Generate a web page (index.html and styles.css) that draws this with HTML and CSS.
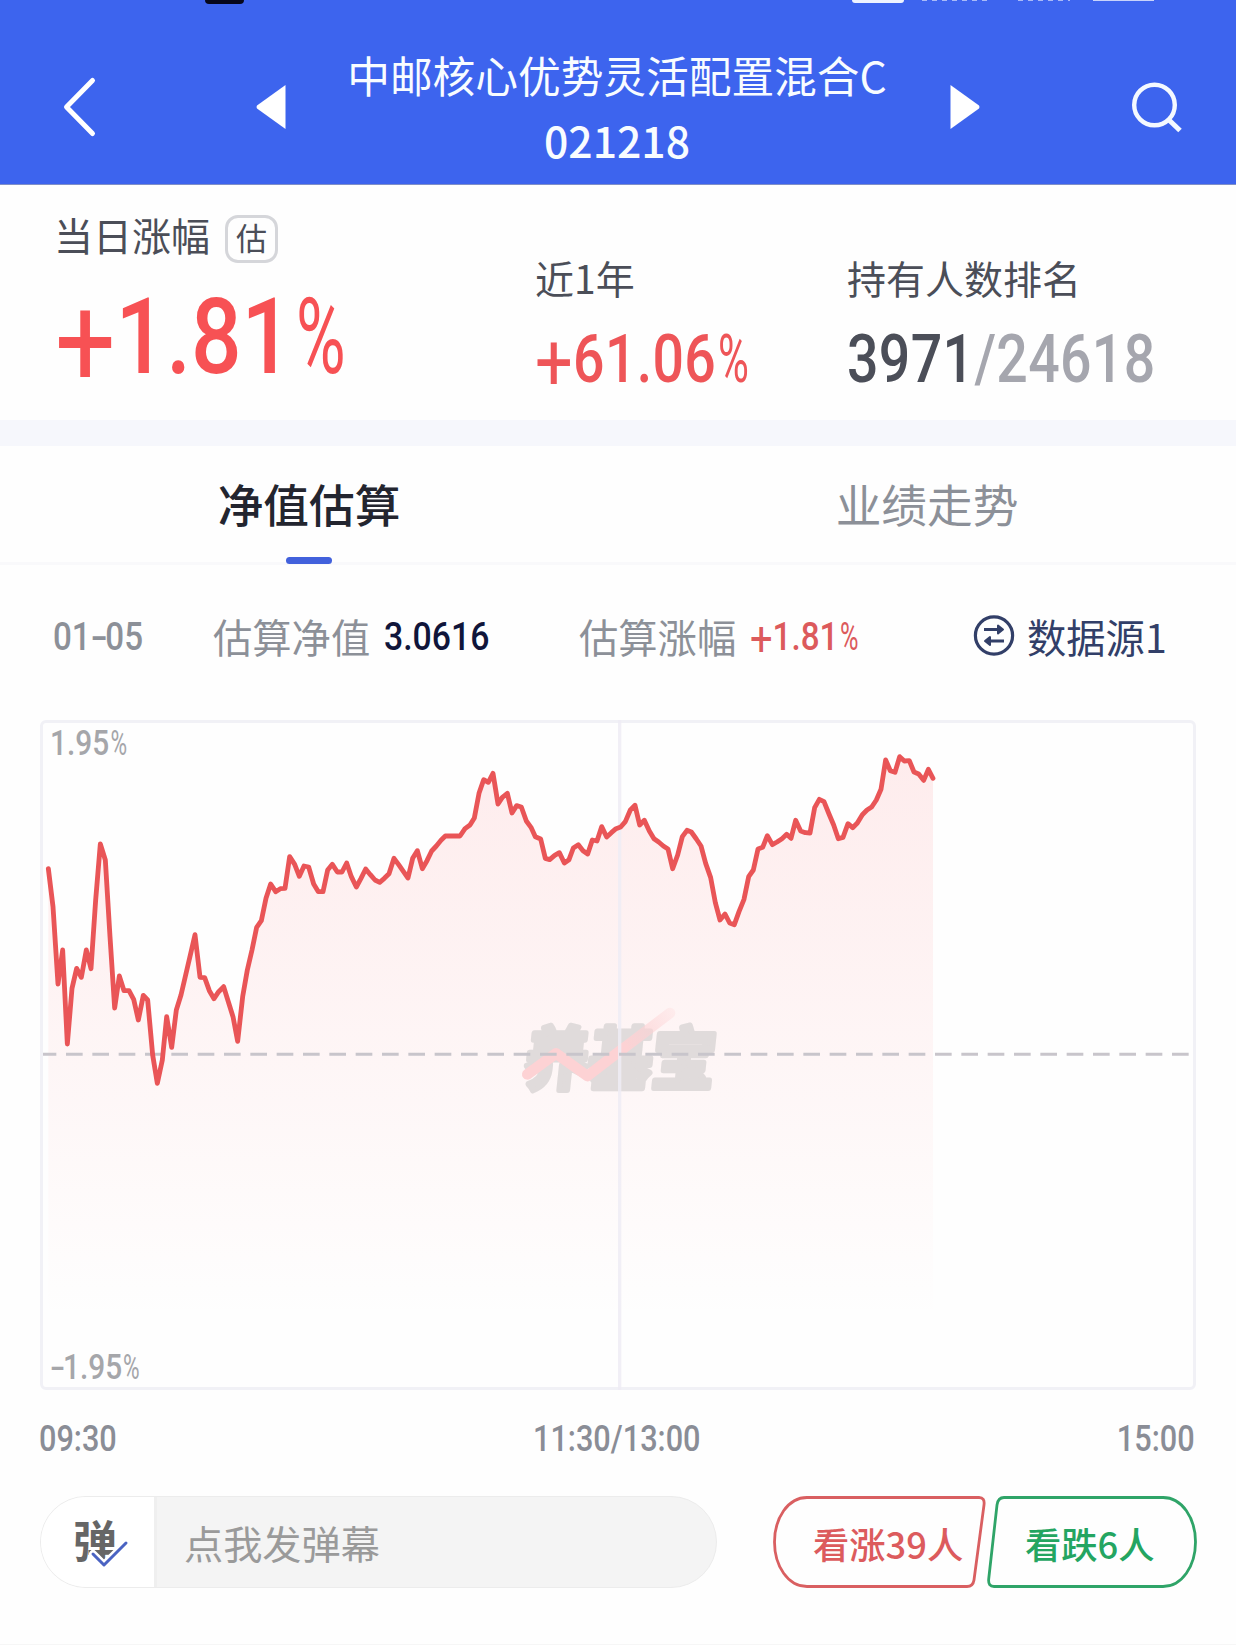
FILE: index.html
```html
<!DOCTYPE html>
<html lang="zh-CN">
<head>
<meta charset="utf-8">
<title>中邮核心优势灵活配置混合C</title>
<link rel="stylesheet" href="styles.css">
</head>
<body>
<header class="topbar">
  <div class="status"><i class="s-black"></i><i class="s-white"></i><i class="s-dots"></i><i class="s-dots s-dots2"></i><i class="s-batt"></i></div>
  <svg class="ic-back" width="40" height="70" viewBox="0 0 40 70"><path d="M32.500 8.500 6.500 35 32.500 61.500" fill="none" stroke="#fff" stroke-width="5" stroke-linecap="round" stroke-linejoin="round"/></svg>
  <svg class="ic-prev" width="30" height="46" viewBox="0 0 30 46"><path d="M29.500 1V45L1 24.500Q0 23 1 21.500Z" fill="#fff"/></svg>
  <h1 class="title"><span>中邮核心优势灵活配置混合C</span><span class="code">021218</span></h1>
  <svg class="ic-next" width="30" height="46" viewBox="0 0 30 46"><path d="M.5 1V45L29 24.500Q30 23 29 21.500Z" fill="#fff"/></svg>
  <svg class="ic-search" width="56" height="56" viewBox="0 0 56 56"><circle cx="26.500" cy="26" r="20.300" fill="none" stroke="#f4f9ff" stroke-width="4.400"/><path d="M41 41 52 51.500" stroke="#f4f9ff" stroke-width="5"/></svg>
</header>

<section class="stats">
  <div class="stat stat-day">
    <div class="label">当日涨幅<span class="badge">估</span></div>
    <div class="num big up"><span class="plus">+</span>1.81<span class="pct">%</span></div>
  </div>
  <div class="stat">
    <div class="label">近1年</div>
    <div class="num mid up"><span class="plus">+</span>61.06<span class="pct">%</span></div>
  </div>
  <div class="stat">
    <div class="label">持有人数排名</div>
    <div class="num mid rank">3971<span>/24618</span></div>
  </div>
</section>

<nav class="tabs">
  <div class="tab active">净值估算</div>
  <div class="tab">业绩走势</div>
</nav>

<section class="info">
  <div class="cell c-date"><span class="num sm">01<span class="dash">-</span>05</span></div>
  <div class="cell c-nav">估算净值<span class="num sm dark">3.0616</span></div>
  <div class="cell c-chg">估算涨幅<span class="num sm red"><span class="plus">+</span>1.81<span class="pct">%</span></span></div>
  <div class="cell c-src">
    <svg width="42" height="42" viewBox="0 0 42 42" fill="none" stroke="#323f68" stroke-width="3.200" stroke-linejoin="round"><circle cx="21" cy="20.500" r="18.600"/><path d="M11 14.500H27M31 26H15"/><path d="M25 10.500V18.500L30 14.500ZM17 22V30L12 26Z" fill="#323f68" stroke-width="2"/></svg>
    <span>数据源1</span>
  </div>
</section>

<section class="chart">
  <svg class="plot" viewBox="30 -60 3468 2010" preserveAspectRatio="none">
    <defs>
      <linearGradient id="fill" gradientUnits="userSpaceOnUse" x1="0" y1="50" x2="0" y2="1740"><stop offset="0" stop-color="#fc4a50" stop-opacity=".1"/><stop offset="1" stop-color="#fc4a50" stop-opacity="0"/></linearGradient>
      <linearGradient id="arrow" gradientUnits="userSpaceOnUse" x1="1780" y1="920" x2="1930" y2="810"><stop offset="0" stop-color="#fdd2d4"/><stop offset="1" stop-color="#fdd2d4" stop-opacity=".25"/></linearGradient>
    </defs>
    <path fill="url(#fill)" d="M55 386 69 500 84 732 98 630 112 912 126 745 140 685 154 712 169 630 183 686 197 480 211 312 226 360 240 590 254 804 268 708 282 752 297 752 311 778 325 840 340 766 353 780 368 945 382 1030 397 960 410 830 425 922 439 810 453 765 467 705 481 645 495 584 510 712 524 713 538 752 552 776 566 755 581 740 595 785 609 830 623 904 638 770 652 690 666 630 680 562 694 542 708 475 722 432 737 455 751 446 765 445 779 350 794 373 808 409 822 378 836 381 851 432 865 455 879 455 893 390 907 373 922 396 936 396 950 369 964 410 979 441 993 415 1007 387 1021 404 1035 420 1049 427 1063 415 1077 401 1092 355 1106 374 1120 394 1134 414 1148 355 1162 332 1177 386 1191 362 1205 333 1219 318 1233 301 1246 288 1290 288 1305 266 1320 255 1333 234 1347 160 1361 119 1375 127 1389 100 1404 192 1417 172 1432 160 1446 219 1460 197 1474 201 1489 243 1503 262 1516 290 1532 297 1546 355 1559 359 1574 346 1588 338 1603 369 1617 359 1630 324 1645 314 1659 332 1673 342 1687 300 1701 303 1715 260 1730 291 1744 278 1758 266 1772 261 1786 245 1801 210 1815 196 1829 255 1843 241 1858 273 1872 296 1886 306 1900 318 1914 327 1928 386 1943 345 1957 290 1971 271 1984 276 1999 297 2013 318 2027 370 2042 413 2056 488 2070 540 2085 522 2099 549 2113 554 2127 515 2142 478 2156 410 2170 390 2184 327 2198 322 2212 287 2227 314 2241 306 2256 296 2270 283 2283 295 2297 241 2312 273 2326 278 2340 279 2354 203 2368 178 2382 185 2397 222 2411 255 2425 296 2439 292 2454 251 2468 263 2482 249 2497 224 2511 210 2525 201 2539 180 2553 148 2567 60 2581 92 2595 97 2609 50 2623 63 2638 62 2652 96 2666 102 2681 121 2695 88 2709 115V1940H55Z"/>
    <g class="watermark">
      <text transform="translate(1478 1031) skewX(-6)" textLength="572" lengthAdjust="spacingAndGlyphs">养基宝</text>
      <path d="M1492 1003 1578 940 1672 1008 1780 925" stroke="#fdd2d4"/>
      <path d="M1775 929 1920 819" stroke="url(#arrow)"/>
    </g>
    <path d="M1769 -60V1950" stroke="#eeecf4" stroke-opacity=".85" stroke-width="10"/>
    <path d="M39 943H3480" stroke="#c8c5cb" stroke-width="9" stroke-dasharray="50 29" stroke-dashoffset="10"/>
    <path class="line" d="M55 386 69 500 84 732 98 630 112 912 126 745 140 685 154 712 169 630 183 686 197 480 211 312 226 360 240 590 254 804 268 708 282 752 297 752 311 778 325 840 340 766 353 780 368 945 382 1030 397 960 410 830 425 922 439 810 453 765 467 705 481 645 495 584 510 712 524 713 538 752 552 776 566 755 581 740 595 785 609 830 623 904 638 770 652 690 666 630 680 562 694 542 708 475 722 432 737 455 751 446 765 445 779 350 794 373 808 409 822 378 836 381 851 432 865 455 879 455 893 390 907 373 922 396 936 396 950 369 964 410 979 441 993 415 1007 387 1021 404 1035 420 1049 427 1063 415 1077 401 1092 355 1106 374 1120 394 1134 414 1148 355 1162 332 1177 386 1191 362 1205 333 1219 318 1233 301 1246 288 1290 288 1305 266 1320 255 1333 234 1347 160 1361 119 1375 127 1389 100 1404 192 1417 172 1432 160 1446 219 1460 197 1474 201 1489 243 1503 262 1516 290 1532 297 1546 355 1559 359 1574 346 1588 338 1603 369 1617 359 1630 324 1645 314 1659 332 1673 342 1687 300 1701 303 1715 260 1730 291 1744 278 1758 266 1772 261 1786 245 1801 210 1815 196 1829 255 1843 241 1858 273 1872 296 1886 306 1900 318 1914 327 1928 386 1943 345 1957 290 1971 271 1984 276 1999 297 2013 318 2027 370 2042 413 2056 488 2070 540 2085 522 2099 549 2113 554 2127 515 2142 478 2156 410 2170 390 2184 327 2198 322 2212 287 2227 314 2241 306 2256 296 2270 283 2283 295 2297 241 2312 273 2326 278 2340 279 2354 203 2368 178 2382 185 2397 222 2411 255 2425 296 2439 292 2454 251 2468 263 2482 249 2497 224 2511 210 2525 201 2539 180 2553 148 2567 60 2581 92 2595 97 2609 50 2623 63 2638 62 2652 96 2666 102 2681 121 2695 88 2709 115"/>
  </svg>
  <span class="num ylab ymax">1.95<span class="pct">%</span></span>
  <span class="num ylab ymin"><span class="dash">-</span>1.95<span class="pct">%</span></span>
</section>

<div class="axis"><span class="num">09:30</span><span class="num">11:30/13:00</span><span class="num">15:00</span></div>

<footer class="bottom">
  <div class="danmu">
    <div class="toggle">弹<svg width="44" height="32" viewBox="0 0 44 32" fill="none" stroke-linecap="round" stroke-linejoin="round"><path d="M6 17 17 28 39 6" stroke="#fff" stroke-width="8"/><path d="M6 17 17 28 39 6" stroke="#4a63c2" stroke-width="3"/></svg></div>
    <div class="field">点我发弹幕</div>
  </div>
  <div class="vote rise"><svg width="214" height="92" viewBox="0 0 214 92"><path d="M34 1.500H206Q212 1.500 211 9L201 84Q200 90.500 194 90.500H34C15 90.500 1.500 70 1.500 46S15 1.500 34 1.500Z"/></svg><span>看涨39人</span></div>
  <div class="vote fall"><svg width="210" height="92" viewBox="0 0 210 92"><path d="M176 1.500H17Q11 1.500 10 9L1.700 83Q1 90.500 7 90.500H176C195 90.500 208.500 70 208.500 46S195 1.500 176 1.500Z"/></svg><span>看跌6人</span></div>
</footer>
</body>
</html>
```
FILE: styles.css
```css
* { box-sizing: border-box; }
body {
  margin: 0;
  width: 1236px;
  height: 1645px;
  overflow: hidden;
  background: #fefefe;
  border-bottom: 1px solid #f6f6f6;
  font-family: "Noto Sans CJK SC", sans-serif;
  color: #4b4e58;
}
svg { display: block; flex: none; }

.topbar {
  position: relative;
  display: flex;
  height: 185px;
  padding-top: 29px;
  background: #3d64ee;
  border-bottom: 1px solid #7f8fc8;
  color: #f8fcff;
}
.ic-back { margin: 43px 0 0 60px; }
.ic-prev { margin: 55px 0 0 156px; }
.title {
  width: 540px;
  margin: 13px 0 0 61px;
  font-size: 42.7px;
  font-weight: 400;
  line-height: 65px;
  text-align: center;
  white-space: nowrap;
}
.title span { display: block; }
.title .code { font-weight: 500; }
.ic-next { margin: 55px 0 0 63px; }
.ic-search { margin: 50px 0 0 148px; }

/* lower edge of the system status bar */
.status i { position: absolute; top: 0; }
.s-black { left: 205px; width: 39px; height: 4px; background: #06071c; border-radius: 0 0 10px 10px; }
.s-white { left: 852px; width: 52px; height: 3px; background: #eef3ff; border-radius: 0 0 6px 6px; }
.s-dots { left: 922px; width: 70px; height: 1px; background: repeating-linear-gradient(90deg, #a9b9f8 0 5px, transparent 5px 10px); }
.status .s-dots2 { left: 1018px; width: 52px; }
.s-batt { left: 1093px; width: 61px; height: 1px; background: #c8d3fb; }

.num {
  display: inline-block;
  font-family: Roboto, sans-serif;
  font-weight: 500;
  white-space: nowrap;
  transform: scaleX(.84);
  transform-origin: left center;
}
/* signs: wide low plus, slim percent, long hyphen */
.plus {
  position: relative;
  top: .1em;
  font-size: 1.2em;
  font-weight: 400;
  line-height: 0;
}
.pct {
  display: inline-block;
  width: .6em;
  margin-left: .04em;
  font-weight: 400;
  transform: scaleX(.76);
  transform-origin: left center;
}
.dash {
  display: inline-block;
  width: .44em;
  transform: scaleX(1.5);
  transform-origin: left center;
}

.stats {
  display: grid;
  grid-template-columns: 480px 312px 1fr;
  height: 235px;
  padding-left: 55px;
}
.stat { padding-top: 67px; }
.stat-day { padding-top: 23px; }
.label { display: flex; height: 50px; line-height: 50px; font-size: 39px; }
.stat-day .label { line-height: 52px; margin-left: -1px; }
.badge {
  width: 53px;
  height: 48px;
  margin: 7px 0 0 15px;
  border: 3px solid #d5d6da;
  border-radius: 13px;
  font-size: 31px;
  line-height: 38px;
  text-align: center;
}
.big { height: 100px; margin-top: 29px; line-height: 100px; font-size: 106px; }
.mid { height: 70px; margin-top: 23px; line-height: 70px; font-size: 66px; letter-spacing: .006em; }
.up { color: #f75154; }
.mid.up { color: #ee5558; }
.rank span { color: #a5a6ae; }

.tabs {
  display: flex;
  height: 145px;
  border-top: 26px solid #f6f7fc;
  border-bottom: 3px solid #f9f9fb;
}
.tab {
  position: relative;
  flex: 1;
  font-size: 45.7px;
  line-height: 115px;
  text-align: center;
  color: #8c9098;
}
.tab.active { font-weight: 500; color: #23252f; }
.tab.active::after {
  content: "";
  position: absolute;
  left: 286px;
  top: 111px;
  width: 46px;
  height: 7px;
  border-radius: 4px;
  background: #4261dc;
}

.info {
  display: grid;
  grid-template-columns: 160px 366px 392px 1fr;
  height: 155px;
  padding: 41px 0 0 53px;
  font-size: 39.3px;
  line-height: 60px;
  color: #8c9098;
}
.cell { display: flex; white-space: nowrap; }
.sm { font-size: 39.5px; line-height: 61px; }
.dark, .red { margin-left: 14px; }
.dark { color: #10153a; transform: scaleX(.855); }
.red { color: #dc5a5c; }
.c-src { color: #323f68; }
.c-src svg { margin: 9px 12px 0 2px; }

.chart {
  position: relative;
  height: 670px;
  margin: 0 40px;
  border: 3px solid #f1f1f6;
  border-radius: 6px;
}
.plot { width: 1156px; height: 670px; margin: -3px 0 0 -3px; }
.line { fill: none; stroke: #e95557; stroke-width: 14.5; stroke-linejoin: round; stroke-linecap: round; }
.watermark text {
  font-size: 204px;
  font-weight: 700;
  fill: #e0dbdb;
  stroke: #e0dbdb;
  stroke-width: 18;
  stroke-linejoin: round;
}
.watermark path { fill: none; stroke-width: 32; stroke-linecap: round; stroke-linejoin: round; }
.ylab { position: absolute; left: 7px; font-size: 35.5px; line-height: 40px; color: #a5a6aa; }
.ymax { top: 0; }
.ymin { bottom: 0; }

.axis {
  display: flex;
  justify-content: space-between;
  height: 95px;
  margin: 0 41px 0 39px;
  padding-top: 18px;
  font-size: 36.5px;
  line-height: 61px;
  color: #8a8d96;
}
.axis .num:nth-child(2) { transform-origin: center; }
.axis .num:last-child { transform-origin: right center; }

.bottom { display: flex; padding: 11px 0 0 40px; }
.danmu {
  display: flex;
  width: 677px;
  height: 92px;
  border: 1px solid #ececec;
  border-radius: 46px;
  background: #f4f4f4;
  overflow: hidden;
}
.toggle {
  position: relative;
  width: 116px;
  padding-left: 32px;
  background: #fff;
  border-right: 3px solid #efefef;
  font-size: 44px;
  font-weight: 700;
  line-height: 85px;
  color: #666;
}
.toggle svg { position: absolute; left: 46px; top: 40px; }
.field { padding-left: 27px; font-size: 39.2px; line-height: 90px; color: #9a9a9a; }
.vote { position: relative; font-size: 36.3px; font-weight: 500; line-height: 94px; }
.vote span { position: relative; }
.vote svg { position: absolute; left: 0; top: 0; fill: none; stroke-width: 2.8; }
.rise { width: 214px; margin-left: 56px; padding-left: 40px; color: #dc5b5d; }
.rise svg { stroke: #d95f61; }
.fall { width: 210px; padding-left: 38px; color: #24a561; }
.fall svg { stroke: #2fa468; }
```
